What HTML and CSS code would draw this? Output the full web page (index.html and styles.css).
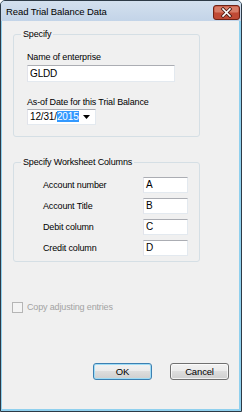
FILE: index.html
```html
<!doctype html>
<html>
	<head>
		<title>Read Trial Balance Data</title>
		<link rel="stylesheet" href="styles.css">
	</head>
	<body>
		<div class="window">
			<div class="titlebar">
				<span class="title">Read Trial Balance Data</span>
				<svg class="close" width="27" height="15" viewBox="0 0 27 15">
					<rect x="0.5" y="0.5" width="26" height="14" rx="2.5" fill="#c04a35" stroke="#6e2215"/>
					<rect x="1.5" y="1.5" width="24" height="6" rx="1.5" fill="#d77c67"/>
					<path d="M10 4 L17 11 M17 4 L10 11" stroke="#4a1a12" stroke-width="3.2" stroke-linecap="square"/>
					<path d="M10 4 L17 11 M17 4 L10 11" stroke="#ffffff" stroke-width="1.6" stroke-linecap="square"/>
				</svg>
			</div>
			<div class="client">
				<div class="group specify">
					<span class="legend">Specify</span>
					<span class="field-label first">Name of enterprise</span>
					<div class="textbox name">GLDD</div>
					<span class="field-label">As-of Date for this Trial Balance</span>
					<div class="textbox datepicker">
						<span class="date">12/31/<span class="sel">2015</span></span>
						<svg width="7" height="4" viewBox="0 0 7 4"><path d="M0 0 H7 L3.5 4 Z" fill="#000"/></svg>
					</div>
				</div>
				<div class="group columns">
					<span class="legend">Specify Worksheet Columns</span>
					<div class="rows">
						<div class="row"><span>Account number</span><div class="textbox cell">A</div></div>
						<div class="row"><span>Account Title</span><div class="textbox cell">B</div></div>
						<div class="row"><span>Debit column</span><div class="textbox cell">C</div></div>
						<div class="row"><span>Credit column</span><div class="textbox cell">D</div></div>
					</div>
				</div>
				<div class="check disabled">
					<span class="box"></span>
					<span>Copy adjusting entries</span>
				</div>
				<div class="buttons">
					<div class="btn default">OK</div>
					<div class="btn">Cancel</div>
				</div>
			</div>
		</div>
	</body>
</html>
```
FILE: styles.css
```css
body {
	margin: 0;
	font-family: "Liberation Sans", Arial, sans-serif;
	font-size: 9px;
	letter-spacing: -0.15px;
	color: #000;
}

.window {
	width: 240px;
	height: 410px;
	border: 1px solid #2d3a46;
	border-radius: 5px 5px 0 0;
	background: #8fd0ee;
	display: flex;
	flex-direction: column;
}

.titlebar {
	height: 20px;
	display: flex;
	align-items: center;
	justify-content: space-between;
	padding: 0 1px 0 5px;
	background: linear-gradient(#d3e0ee, #c3d4e8);
	border-radius: 4px 4px 0 0;
}

.title {
	font-size: 9.5px;
	letter-spacing: -0.1px;
	color: #000;
	margin-top: 1px;
}

.close {
	display: block;
	margin-top: 2px;
}

.client {
	flex: 1;
	margin: 0 2px 2px 1px;
	background: #f0f0f0;
	display: flex;
	flex-direction: column;
	padding: 13px 10px 0 11px;
}

/* group boxes */

.group {
	width: 172px;
	border: 1px solid #d5dfe5;
	border-radius: 3px;
	display: flex;
	flex-direction: column;
	align-items: flex-start;
	padding: 0 0 0 13px;
}

.legend {
	margin: -7px 0 0 -6px;
	padding: 0 2px;
	line-height: 12px;
	background: #f0f0f0;
}

.specify {
	padding-bottom: 11px;
}

.field-label {
	line-height: 12px;
	margin-top: 14px;
}

.field-label.first {
	margin-top: 11px;
}

.textbox {
	box-sizing: border-box;
	height: 17px;
	background: #fff;
	border: 1px solid #e3e9ef;
	border-top-color: #abadb3;
	border-left-color: #e2e3ea;
	padding: 0 2px;
	line-height: 15px;
	font-size: 10px;
	margin-top: 2px;
}

.name {
	width: 148px;
}

.datepicker {
	width: 69px;
	height: 16px;
	line-height: 14px;
	margin-top: 1px;
	display: flex;
	align-items: center;
	justify-content: space-between;
	padding: 0 1px 0 2px;
}

.datepicker svg {
	margin-right: 4px;
}

.sel {
	background: #3399ff;
	color: #fff;
}

.columns {
	margin-top: 25px;
	padding-bottom: 5px;
}

.rows {
	margin-top: 9px;
	display: flex;
	flex-direction: column;
	gap: 5px;
	align-self: stretch;
}

.row {
	display: flex;
	align-items: center;
	justify-content: space-between;
	padding: 0 11px 0 16px;
}

.cell {
	width: 45px;
	height: 16px;
	margin-top: 0;
	line-height: 14px;
}

/* checkbox */

.check {
	display: flex;
	align-items: center;
	gap: 4px;
	margin: 39px 0 0 -1px;
	line-height: 12px;
}

.check .box {
	box-sizing: border-box;
	width: 11px;
	height: 11px;
	border: 1px solid #b5b5b5;
	background: #f4f4f4;
}

.disabled {
	color: #a3a3a3;
}

/* buttons */

.buttons {
	display: flex;
	justify-content: flex-end;
	gap: 18px;
	margin-top: 50px;
}

.btn {
	box-sizing: border-box;
	width: 59px;
	height: 17px;
	border: 1px solid #707070;
	border-radius: 3px;
	background: linear-gradient(#f2f2f2 0%, #ebebeb 45%, #dddddd 50%, #cfcfcf 100%);
	box-shadow: inset 0 0 0 1px rgba(255, 255, 255, 0.7);
	text-align: center;
	line-height: 15px;
	font-size: 9.5px;
}

.btn.default {
	border-color: #3c7fb1;
	box-shadow: inset 0 0 0 1px #9edcf6;
}
```
